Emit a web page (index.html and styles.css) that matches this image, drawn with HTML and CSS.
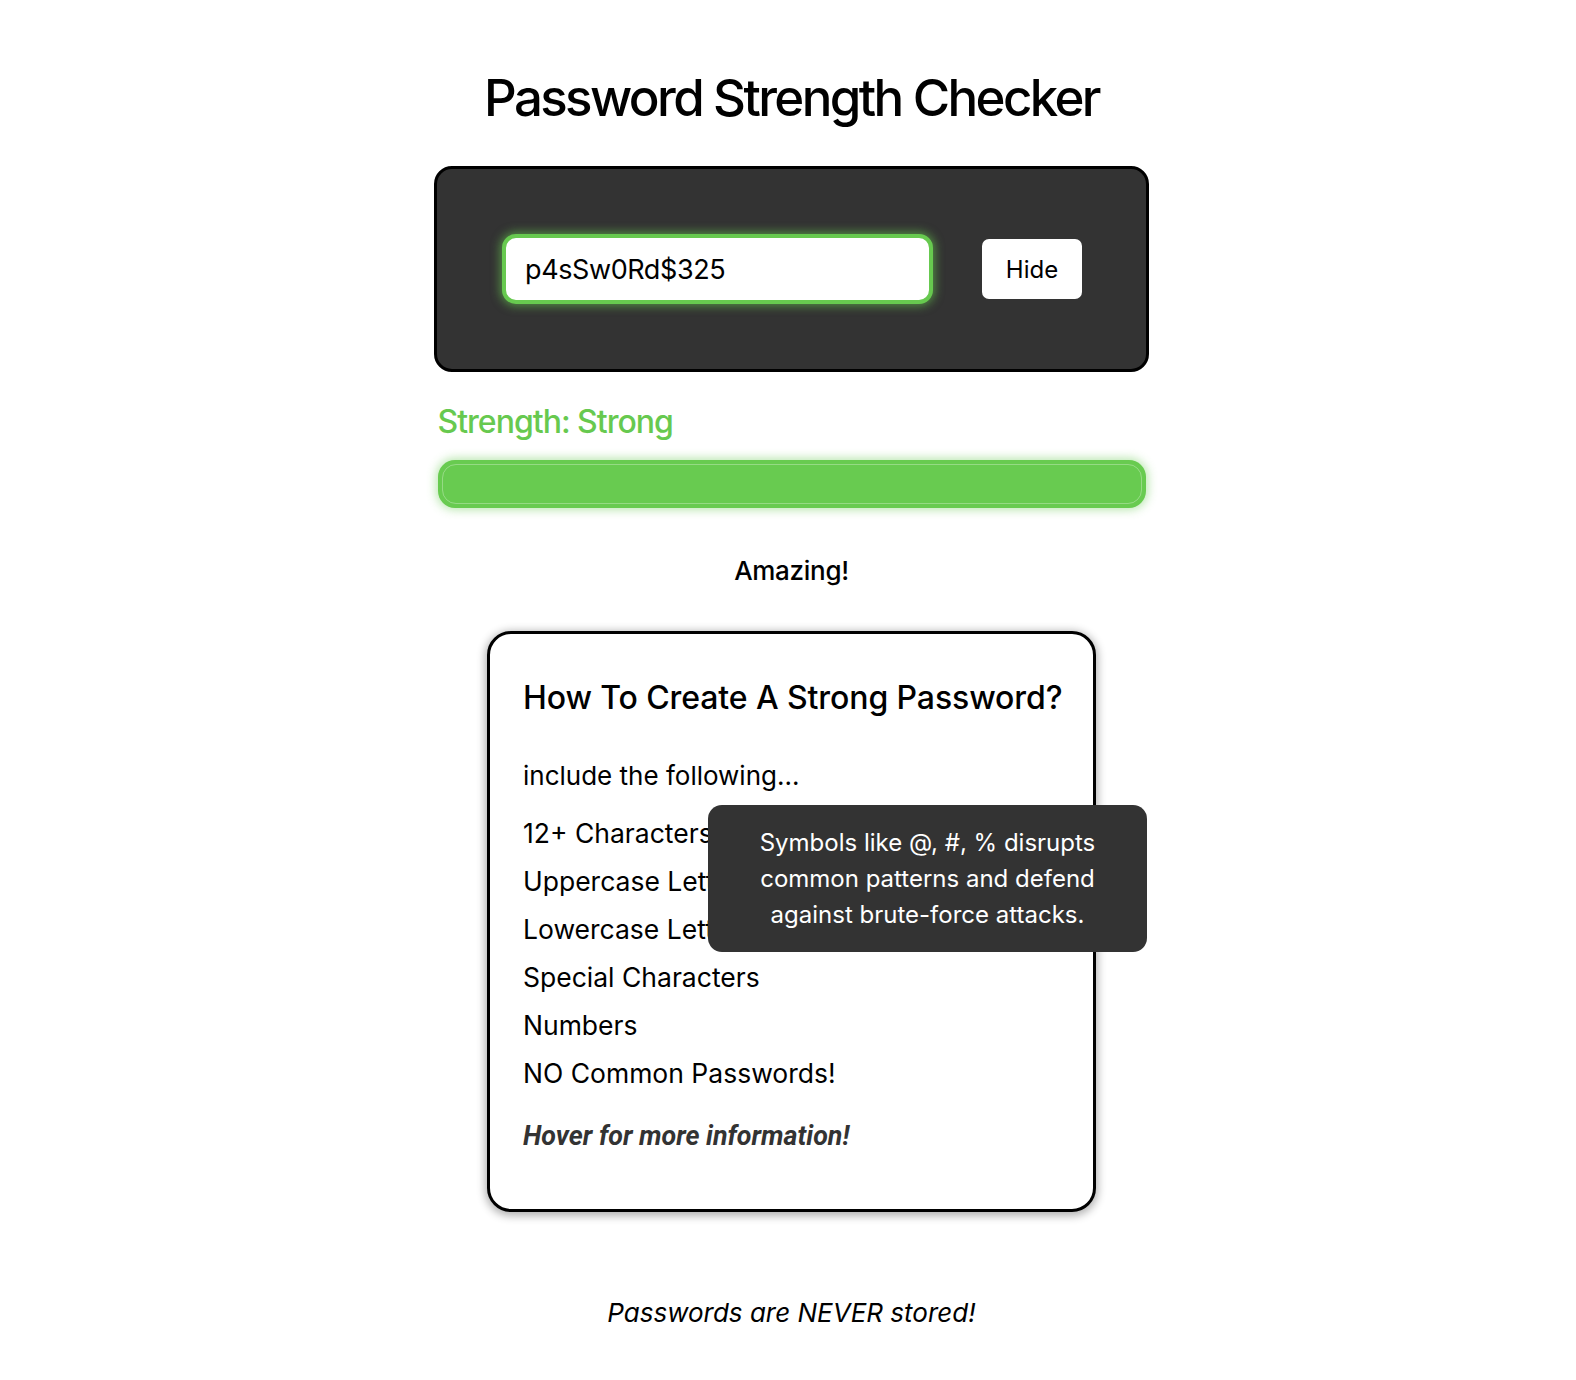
FILE: index.html
```html
<!DOCTYPE html>
<html lang="en">
<head>
<meta charset="utf-8">
<title>Password Strength Checker</title>
<link rel="stylesheet" href="styles.css">
</head>
<body>
<main class="page">
  <h1 class="title">Password Strength Checker</h1>
  <section class="entry">
    <div class="field">p4sSw0Rd$325</div>
    <button class="toggle" type="button">Hide</button>
  </section>
  <section class="meter">
    <div class="meter-label">Strength: Strong</div>
    <div class="bar"><div class="bar-fill"></div></div>
    <div class="verdict">Amazing!</div>
  </section>
  <section class="tips">
    <h2 class="tips-title">How To Create A Strong Password?</h2>
    <p class="tips-intro">include the following...</p>
    <ul class="tips-list">
      <li>12+ Characters</li>
      <li>Uppercase Letters</li>
      <li>Lowercase Letters</li>
      <li>Special Characters</li>
      <li>Numbers</li>
      <li>NO Common Passwords!</li>
    </ul>
    <p class="tips-hint">Hover for more information!</p>
    <div class="tooltip">Symbols like @, #, % disrupts<br>common patterns and defend<br>against brute-force attacks.</div>
  </section>
  <p class="footnote">Passwords are NEVER stored!</p>
</main>
</body>
</html>
```

FILE: styles.css
```css
* { box-sizing: border-box; }
html, body { margin: 0; padding: 0; background: #fff; }
body {
  font-family: "Inter", "Liberation Sans", sans-serif;
  color: #000;
}
.page {
  display: flex;
  flex-direction: column;
  align-items: center;
  padding: 69px 0 0 7px;
}
.title {
  margin: 0;
  font-size: 51px;
  font-weight: 500;
  line-height: 58px;
  letter-spacing: -2.6px;
}
.entry {
  margin-top: 39px;
  width: 715px;
  height: 206px;
  background: #333;
  border: 3px solid #000;
  border-radius: 18px;
  display: flex;
  align-items: center;
  padding: 0 64px 0 65px;
  gap: 49px;
}
.field {
  width: 431px;
  height: 70px;
  background: #fff;
  border: 4px solid #67c94f;
  border-radius: 14px;
  box-shadow: 0 0 10px 2px rgba(103, 201, 79, 0.6);
  display: flex;
  align-items: center;
  padding-left: 19px;
  font-size: 27px;
  letter-spacing: -0.4px;
  color: #000;
}
.toggle {
  width: 100px;
  height: 60px;
  background: #fff;
  border: none;
  border-radius: 7px;
  font-family: inherit;
  font-size: 24px;
  color: #000;
  padding: 0;
}
.meter {
  width: 708px;
  display: flex;
  flex-direction: column;
}
.meter-label {
  margin-top: 32px;
  font-size: 32px;
  font-weight: 500;
  letter-spacing: -1px;
  color: #67c94f;
  line-height: 36px;
}
.bar {
  margin-top: 20px;
  height: 48px;
  border-radius: 17px;
  background: #68cb50;
  box-shadow: 0 0 10px 2px rgba(103, 201, 79, 0.45);
  padding: 4px;
}
.bar-fill {
  height: 100%;
  border-radius: 14px;
  border: 1px solid rgba(255, 255, 255, 0.3);
}
.verdict {
  margin-top: 48px;
  text-align: center;
  font-size: 26px;
  font-weight: 500;
  letter-spacing: -0.3px;
  line-height: 30px;
}
.tips {
  position: relative;
  margin-top: 45px;
  width: 609px;
  border: 3px solid #000;
  border-radius: 24px;
  box-shadow: 0 2px 8px 2px rgba(0, 0, 0, 0.3);
  padding: 44px 20px 57px 33px;
  background: #fff;
}
.tips-title {
  margin: 0;
  font-size: 32px;
  font-weight: 500;
  line-height: 40px;
  white-space: nowrap;
  letter-spacing: -0.1px;
}
.tips-intro {
  margin: 42px 0 0;
  font-size: 26px;
  line-height: 32px;
}
.tips-list {
  list-style: none;
  margin: 25px 0 0;
  padding: 0;
  display: flex;
  flex-direction: column;
  gap: 16px;
}
.tips-list li {
  font-size: 26.5px;
  line-height: 32px;
}
.tips-hint {
  margin: 31px 0 0;
  font-family: "Roboto", "Liberation Sans", sans-serif;
  font-style: italic;
  font-weight: 700;
  font-size: 26.8px;
  line-height: 32px;
  color: #333;
}
.tooltip {
  position: absolute;
  left: 218px;
  top: 171px;
  width: 439px;
  height: 147px;
  background: #333;
  color: #fff;
  border-radius: 14px;
  font-size: 24px;
  line-height: 36px;
  text-align: center;
  padding-top: 20px;
}
.footnote {
  margin: 85px 0 0;
  font-size: 26px;
  font-style: italic;
  line-height: 32px;
}
```
